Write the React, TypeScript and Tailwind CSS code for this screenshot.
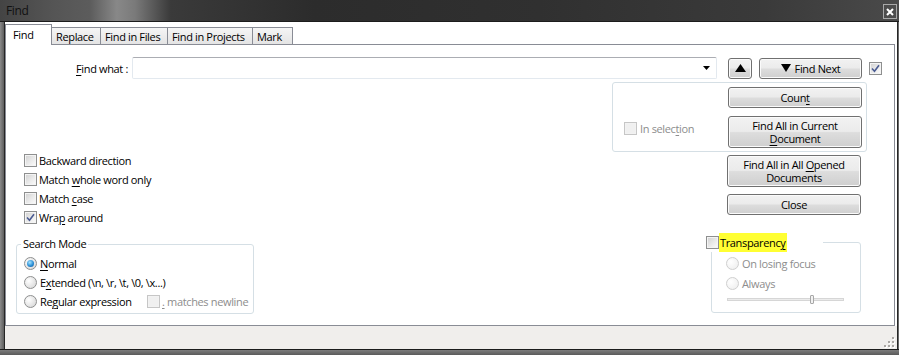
import React from "react";

function U({ children }: { children: React.ReactNode }) {
  return <span className="underline underline-offset-[2px] decoration-[1px]">{children}</span>;
}

function Box({ checked = false, disabled = false }: { checked?: boolean; disabled?: boolean }) {
  return (
    <span
      className={`w-[13px] h-[13px] shrink-0 border flex items-center justify-center ${
        disabled ? "border-[#c6c6c6] bg-[#f4f4f4]" : "border-[#8e8f8f] bg-white"
      }`}
    >
      <span
        className={`w-[11px] h-[11px] border flex items-center justify-center ${
          disabled
            ? "border-[#f2f2f2] bg-[#f0f0f0]"
            : "border-[#f4f4f4] bg-[linear-gradient(135deg,#d4d4d4_0%,#e8e8e8_50%,#f9f9f9_100%)]"
        }`}
      >
        {checked && (
          <svg width="9" height="9" viewBox="0 0 9 9">
            <path d="M1 4.5 L3.5 7.2 L8 1.2" fill="none" stroke="#4a5b92" strokeWidth="1.6" />
          </svg>
        )}
      </span>
    </span>
  );
}

function Radio({ checked = false, disabled = false }: { checked?: boolean; disabled?: boolean }) {
  return (
    <span
      className={`w-[13px] h-[13px] shrink-0 rounded-full border flex items-center justify-center ${
        disabled
          ? "border-[#cfcfcf] bg-[radial-gradient(circle_at_35%_35%,#ffffff,#ececec)]"
          : "border-[#8e8f8f] bg-[radial-gradient(circle_at_35%_35%,#ffffff,#d2d2d2)]"
      }`}
    >
      {checked && (
        <span className="w-[7px] h-[7px] rounded-full bg-[radial-gradient(circle_at_40%_35%,#a6e4ff_0%,#2b8fd6_55%,#0f4f8d_100%)]" />
      )}
    </span>
  );
}

function Btn({ children, className = "" }: { children: React.ReactNode; className?: string }) {
  return (
    <div
      className={`shrink-0 border border-[#707070] rounded-[3px] bg-[linear-gradient(to_bottom,#f2f2f2_0%,#ebebeb_48%,#dddddd_52%,#cfcfcf_100%)] shadow-[inset_0_0_0_1px_#fbfbfb] flex items-center justify-center text-center leading-[13px] whitespace-nowrap ${className}`}
    >
      {children}
    </div>
  );
}

function CheckRow({ label, checked = false }: { label: React.ReactNode; checked?: boolean }) {
  return (
    <div className="h-[19px] flex items-center gap-[2px] whitespace-nowrap">
      <Box checked={checked} />
      <span>{label}</span>
    </div>
  );
}

const tabCls =
  "h-[18px] -ml-px border border-[#898c95] bg-[linear-gradient(to_bottom,#f5f5f5,#e4e4e4)] pl-[4px] leading-[17px] whitespace-nowrap shrink-0";

export default function App() {
  return (
    <div className="w-[899px] h-[355px] flex flex-col bg-[#5a5a5a] font-['Open_Sans',sans-serif] text-[11px] tracking-[-0.35px] leading-[15px] text-black overflow-hidden">
      {/* Title bar */}
      <div className="h-[21px] flex items-center bg-[linear-gradient(to_right,#444_0%,#555_6%,#5c5c5c_10%,#888_13%,#7a7a7a_15%,#3a3a3a_19%,#2c2c2c_35%,#303030_60%,#3a3a3a_85%,#4a4a4a_100%)]">
        <span className="ml-[6px] text-[12px] text-[#111111]">Find</span>
        <div className="ml-auto mr-[2px] mt-[2px] w-[14px] h-[15px] border border-[#a8a8a8] bg-[#4c4c4c] flex items-center justify-center">
          <svg width="8" height="8" viewBox="0 0 8 8">
            <path d="M1 1 L7 7 M7 1 L1 7" stroke="#ffffff" strokeWidth="2" />
          </svg>
        </div>
      </div>
      <div className="h-px bg-[#1c1c1c]" />

      {/* Middle */}
      <div className="flex h-[327px]">
        <div className="w-[4px] bg-[linear-gradient(to_right,#8a8a8a,#5e5e5e)]" />
        <div className="w-px bg-[#262626]" />
        <div className="w-[892px] bg-white flex flex-col">
          {/* Tabs */}
          <div className="h-[23px] -mb-px flex items-end relative z-10">
            <div className="h-[21px] w-[47px] shrink-0 border border-b-0 border-[#898c95] bg-white pl-[7px] pt-[2px] relative z-10">
              Find
            </div>
            <div className={`${tabCls} w-[50px]`}>Replace</div>
            <div className={`${tabCls} w-[68px]`}>Find in Files</div>
            <div className={`${tabCls} w-[86px]`}>Find in Projects</div>
            <div className={`${tabCls} w-[41px]`}>Mark</div>
          </div>

          {/* Panel */}
          <div className="w-[890px] h-[282px] border border-[#898c95] flex flex-col">
            {/* Row 1 */}
            <div className="mt-[12px] h-[22px] flex items-center">
              <div className="w-[122px] text-right whitespace-nowrap">
                <U>F</U>ind what :
              </div>
              <div className="ml-[4px] w-[585px] h-[22px] shrink-0 rounded-[2px] border border-[#e3e9ef] border-t-[#abadb3] flex items-center justify-end pr-[6px]">
                <svg width="7" height="4" viewBox="0 0 7 4">
                  <path d="M0 0 H7 L3.5 4 Z" fill="#000" />
                </svg>
              </div>
              <Btn className="ml-[11px] w-[24px] h-[21px]">
                <svg width="11" height="8" viewBox="0 0 11 8">
                  <path d="M5.5 0 L11 8 H0 Z" fill="#000" />
                </svg>
              </Btn>
              <Btn className="ml-[7px] w-[103px] h-[21px] gap-[4px]">
                <svg width="10" height="8" viewBox="0 0 10 8">
                  <path d="M0 0 H10 L5 8 Z" fill="#000" />
                </svg>
                <span>Find Next</span>
              </Btn>
              <span className="ml-[7px]">
                <Box checked />
              </span>
            </div>

            {/* Row 2 */}
            <div className="mt-[3px] flex">
              {/* Left column */}
              <div className="w-[606px] shrink-0 flex flex-col">
                <div className="mt-[69px] pl-[18px] flex flex-col">
                  <CheckRow label="Backward direction" />
                  <CheckRow label={<>Match <U>w</U>hole word only</>} />
                  <CheckRow label={<>Match <U>c</U>ase</>} />
                  <CheckRow label={<>Wra<U>p</U> around</>} checked />
                </div>
                <fieldset className="mt-[9px] ml-[10px] w-[238px] min-w-0 h-[78px] border border-[#d5dfe5] rounded-[3px]">
                  <legend className="ml-[4px] px-[2px] leading-[16px]">Search Mode</legend>
                  <div className="mt-[2px] pl-[7px] flex flex-col whitespace-nowrap">
                    <div className="h-[19px] flex items-center gap-[3px]">
                      <Radio checked />
                      <span>
                        <U>N</U>ormal
                      </span>
                    </div>
                    <div className="h-[19px] flex items-center gap-[3px]">
                      <Radio />
                      <span>
                        E<U>x</U>tended (\n, \r, \t, \0, \x...)
                      </span>
                    </div>
                    <div className="h-[19px] flex items-center gap-[3px]">
                      <Radio />
                      <span className="w-[104px] shrink-0">
                        Re<U>g</U>ular expression
                      </span>
                      <Box disabled />
                      <span className="-ml-px text-[#8d8d8d]">
                        <U>.</U> matches newline
                      </span>
                    </div>
                  </div>
                </fieldset>
              </div>

              {/* Right column */}
              <div className="w-[255px] shrink-0 flex flex-col">
                <div className="h-[70px] w-[255px] border border-[#d5dfe5] rounded-[3px] flex">
                  <div className="w-[115px] shrink-0 pl-[11px] pt-[39px]">
                    <div className="h-[13px] flex items-center gap-[3px] text-[#8d8d8d] whitespace-nowrap">
                      <Box disabled />
                      <span>
                        In selec<U>t</U>ion
                      </span>
                    </div>
                  </div>
                  <div className="w-[134px] shrink-0 pt-[4px] flex flex-col gap-[8px]">
                    <Btn className="h-[21px]">
                      <span>
                        Coun<U>t</U>
                      </span>
                    </Btn>
                    <Btn className="h-[32px]">
                      <span>
                        Find All in Current
                        <br />
                        <U>D</U>ocument
                      </span>
                    </Btn>
                  </div>
                </div>
                <Btn className="mt-[3px] ml-[115px] w-[134px] h-[32px]">
                  <span>
                    Find All in All <U>O</U>pened
                    <br />
                    Documents
                  </span>
                </Btn>
                <Btn className="mt-[7px] ml-[115px] w-[134px] h-[21px]">Close</Btn>

                <fieldset className="mt-[18px] ml-[99px] w-[150px] min-w-0 h-[80px] border border-[#d5dfe5] rounded-[3px]">
                  <legend className="-ml-[6px] h-[19px] flex items-center whitespace-nowrap">
                    <Box />
                    <span className="h-[19px] px-[1px] bg-[#ffff33] flex items-center">
                      Transparenc<U>y</U>
                    </span>
                    <span className="w-[36px]" />
                  </legend>
                  <div className="mt-[1px] pl-[14px] flex flex-col text-[#8d8d8d] whitespace-nowrap">
                    <div className="h-[20px] flex items-center gap-[3px]">
                      <Radio disabled />
                      <span>On losing focus</span>
                    </div>
                    <div className="h-[20px] flex items-center gap-[3px]">
                      <Radio disabled />
                      <span>Always</span>
                    </div>
                    <div className="mt-[1px] ml-px w-[117px] h-[10px] relative flex items-center">
                      <div className="w-full h-[3px] border border-[#d6d6d6] bg-[#ececec]" />
                      <div className="absolute left-[83px] top-[1px] w-[4px] h-[9px] border border-[#a8a8a8] bg-[#f2f2f2] rounded-[1px]" />
                    </div>
                  </div>
                </fieldset>
              </div>
            </div>
          </div>

          {/* Status strip */}
          <div className="h-[23px] bg-[#f0eeec] flex justify-end items-end pr-[2px] pb-[1px]">
            <svg width="11" height="11" viewBox="0 0 11 11">
              {[
                [9, 1],
                [9, 5],
                [5, 5],
                [9, 9],
                [5, 9],
                [1, 9],
              ].map(([x, y], i) => (
                <g key={i}>
                  <rect x={x} y={y} width="2" height="2" fill="#ffffff" />
                  <rect x={x - 1} y={y - 1} width="2" height="2" fill="#a9a6a3" />
                </g>
              ))}
            </svg>
          </div>
        </div>
        <div className="w-px bg-[#262626]" />
        <div className="w-px bg-[#6a6a6a]" />
      </div>
      <div className="h-px bg-[#1c1c1c]" />
      <div className="h-[5px] bg-[linear-gradient(to_bottom,#7c7c7c,#5a5a5a)]" />
    </div>
  );
}
